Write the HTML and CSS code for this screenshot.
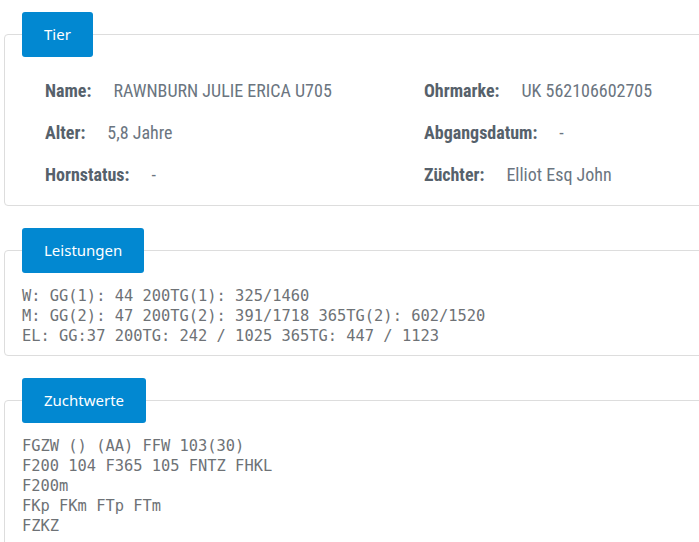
FILE: index.html
```html
<!DOCTYPE html>
<html lang="de">
<head>
<meta charset="utf-8">
<title>Tier</title>
<link rel="stylesheet" href="styles.css">
</head>
<body>
<div class="page">
  <fieldset class="panel panel-tier">
    <legend class="badge">Tier</legend>
    <div class="grid">
      <div class="col">
        <div class="row"><span class="label">Name:</span><span class="value">RAWNBURN JULIE ERICA U705</span></div>
        <div class="row"><span class="label">Alter:</span><span class="value">5,8 Jahre</span></div>
        <div class="row"><span class="label">Hornstatus:</span><span class="value">-</span></div>
      </div>
      <div class="col">
        <div class="row"><span class="label">Ohrmarke:</span><span class="value">UK 562106602705</span></div>
        <div class="row"><span class="label">Abgangsdatum:</span><span class="value">-</span></div>
        <div class="row"><span class="label">Züchter:</span><span class="value">Elliot Esq John</span></div>
      </div>
    </div>
  </fieldset>

  <fieldset class="panel">
    <legend class="badge">Leistungen</legend>
    <pre class="mono">W: GG(1): 44 200TG(1): 325/1460
M: GG(2): 47 200TG(2): 391/1718 365TG(2): 602/1520
EL: GG:37 200TG: 242 / 1025 365TG: 447 / 1123</pre>
  </fieldset>

  <fieldset class="panel">
    <legend class="badge">Zuchtwerte</legend>
    <pre class="mono">FGZW () (AA) FFW 103(30)
F200 104 F365 105 FNTZ FHKL
F200m
FKp FKm FTp FTm
FZKZ</pre>
  </fieldset>
</div>
</body>
</html>
```

FILE: styles.css
```css
html, body {
  margin: 0;
  padding: 0;
  background: #ffffff;
  overflow: hidden;
}

.page {
  width: 880px;
  padding: 12px 0 0 4px;
  display: flex;
  flex-direction: column;
  gap: 22px;
}

.panel {
  margin: 0;
  border: 1px solid #dddddd;
  border-radius: 4px;
  padding: 0 17px 9px 17px;
  min-width: 0;
}

.panel-tier {
  padding-bottom: 10px;
}

.badge {
  background: #0288d1;
  color: #ffffff;
  font-family: "Noto Sans", "Open Sans", sans-serif;
  font-size: 15px;
  height: 45px;
  line-height: 45px;
  padding: 0 22px;
  border-radius: 3px;
  margin: 0;
}

.grid {
  display: grid;
  grid-template-columns: 379px 1fr;
  padding: 12px 0 0 23px;
}

.col {
  display: flex;
  flex-direction: column;
}

.row {
  display: flex;
  gap: 22px;
  height: 42px;
  align-items: center;
  font-family: "Roboto Condensed", Roboto, sans-serif;
  font-stretch: condensed;
  font-size: 18px;
}

.label {
  font-weight: 700;
  color: #56616b;
}

.value {
  color: #6b7580;
}

.mono {
  margin: 13px 0 0 0;
  font-family: "DejaVu Sans Mono", "Liberation Mono", monospace;
  font-size: 15.4px;
  line-height: 20px;
  color: #6e7276;
}
```
